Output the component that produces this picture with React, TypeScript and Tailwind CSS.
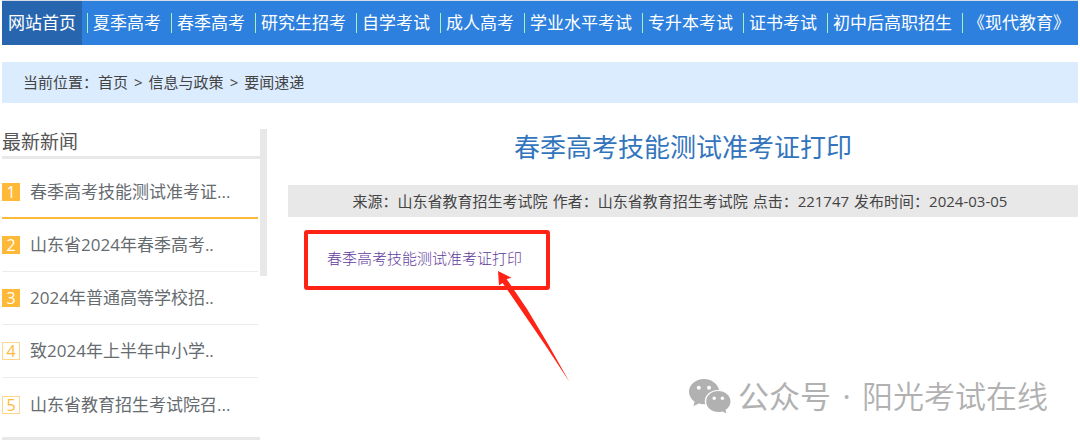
import React from 'react';
import clsx from 'clsx';

const navItems = [
  '夏季高考',
  '春季高考',
  '研究生招考',
  '自学考试',
  '成人高考',
  '学业水平考试',
  '专升本考试',
  '证书考试',
  '初中后高职招生',
  '《现代教育》',
];

const news = [
  '春季高考技能测试准考证...',
  '山东省2024年春季高考..',
  '2024年普通高等学校招..',
  '致2024年上半年中小学..',
  '山东省教育招生考试院召...',
];

const NavBar: React.FC = () => (
  <nav className="flex h-11 items-center overflow-hidden whitespace-nowrap bg-[#2d80de] text-[17px] text-white">
    <a href="#" className="flex h-full w-20 shrink-0 items-center justify-center bg-[#2766ae]">
      网站首页
    </a>
    <ul className="ml-[5px] flex items-center">
      {navItems.map((item) => (
        <li key={item} className="flex h-5 items-center border-l border-[#a6f3b4] pr-[10px] pl-[5px]">
          <a href="#">{item}</a>
        </li>
      ))}
    </ul>
  </nav>
);

const Breadcrumb: React.FC = () => (
  <div className="mt-[17px] flex h-[41px] items-center bg-[#dbecff] px-[21px] text-[15px] text-[#444]">
    <span>当前位置：</span>
    <a href="#">首页</a>
    <span className="px-[6px]">&gt;</span>
    <a href="#">信息与政策</a>
    <span className="px-[6px]">&gt;</span>
    <a href="#">要闻速递</a>
  </div>
);

const Sidebar: React.FC = () => (
  <aside className="flex shrink-0 items-start">
    <div className="w-[258px] border-b-4 border-[#e8e8e8] pb-[6px]">
      <h2 className="flex h-[30px] items-center border-b-3 border-[#e8e8e8] text-[19px] text-[#555]">最新新闻</h2>
      <ol className="mr-[2px] pt-[7px]">
        {news.map((title, i) => (
          <li
            key={title}
            className={clsx(
              'flex h-[53px] items-center gap-[10px]',
              i === 0 && 'border-b-2 border-[#ffb938]',
              i > 0 && i < 4 && 'border-b border-[#ececec]',
            )}
          >
            <span
              className={clsx(
                'flex size-[18px] shrink-0 items-center justify-center border text-base leading-none',
                i < 3 ? 'border-[#ffb938] bg-[#ffb938] text-white' : 'border-[#ffd78c] text-[#ffb938]',
              )}
            >
              {i + 1}
            </span>
            <a href="#" className="whitespace-nowrap text-[17px] text-[#666b70]">
              {title}
            </a>
          </li>
        ))}
      </ol>
    </div>
    <div className="h-[147px] w-[7px] bg-[#e8e8e8]" />
  </aside>
);

const Arrow: React.FC = () => (
  <svg
    className="absolute top-[37px] left-[190px] h-[112px] w-[73px]"
    viewBox="0 0 73 112"
    fill="#ff2316"
    aria-hidden="true"
  >
    <path d="M0 0 L13.5 6.8 L8.6 8 L29 38 L50 73 L71.5 111 L48.500 76 L24.500 41 L4.600 12 L1 14.500 Z" />
  </svg>
);

const Article: React.FC = () => (
  <main className="min-w-0 flex-1">
    <h1 className="flex h-9 items-center justify-center text-[26px] text-[#3375bd]">春季高考技能测试准考证打印</h1>
    <p className="mt-5 flex h-8 items-center justify-center gap-[5px] whitespace-nowrap bg-[#e8e8e8] pr-[6px] text-[15px] text-[#444]">
      <span>来源：山东省教育招生考试院</span>
      <span>作者：山东省教育招生考试院</span>
      <span>点击：221747</span>
      <span>发布时间：2024-03-05</span>
    </p>
    <div className="relative mt-[13px] ml-4 flex h-[60px] w-[246px] items-center rounded-[3px] border-4 border-[#ff2316] pb-1 pl-[19px]">
      <a href="#" className="whitespace-nowrap text-[15px] font-light text-[#5f3c9c]">
        春季高考技能测试准考证打印
      </a>
      <Arrow />
    </div>
  </main>
);

const WeChatIcon: React.FC = () => (
  <svg className="h-[34px] w-[42px]" viewBox="0 0 42 34" fill="#b1b1b1" aria-hidden="true">
    <path d="M15 0C6.700 0 0 5.700 0 12.800c0 4 2.200 7.500 5.600 9.900L4.400 27.300l5.400-2.700c1.700.5 3.400.7 5.300.7h1.200c-.3-1-.5-2-.5-3.100 0-6.200 5.900-11.200 13-11.200h1.300C28.600 4.700 22.400 0 15 0z" />
    <path d="M41.500 22.500c0-5.900-5.500-10.500-12.200-10.500S17.200 16.600 17.200 22.500 22.700 33 29.300 33c1.400 0 2.800-.2 4-.6l4.200 2-1-3.500c3-1.900 5-5 5-8.400z" />
    <g fill="#fff">
      <circle cx="9.800" cy="8.800" r="2" />
      <circle cx="20" cy="8.800" r="2" />
      <circle cx="25.200" cy="19.300" r="1.700" />
      <circle cx="33.400" cy="19.300" r="1.700" />
    </g>
  </svg>
);

const Watermark: React.FC = () => (
  <div className="absolute right-[32px] bottom-[22px] flex h-[46px] items-center whitespace-nowrap text-[31px] text-[#b1b1b1]">
    <WeChatIcon />
    <span className="ml-[7px]">公众号</span>
    <span className="w-[31px] text-center">·</span>
    <span className="font-[350]">阳光考试在线</span>
  </div>
);

const App: React.FC = () => {
  return (
    <div className="relative min-h-screen bg-white px-[2px] font-['Open_Sans','Noto_Sans_CJK_SC',sans-serif]">
      <div className="h-px bg-[#d5dce5]" />
      <NavBar />
      <Breadcrumb />
      <div className="mt-[26px] flex gap-[21px]">
        <Sidebar />
        <Article />
      </div>
      <Watermark />
    </div>
  );
};

export default App;
